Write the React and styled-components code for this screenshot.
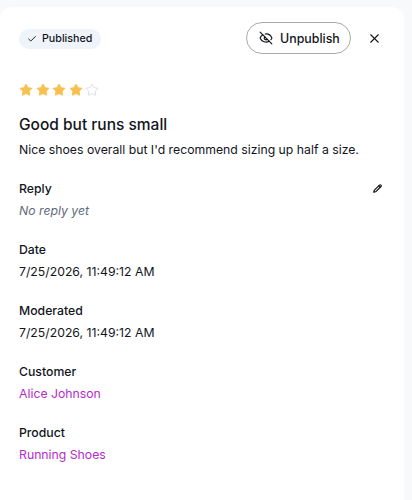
import React from "react";
import styled, { createGlobalStyle } from "styled-components";
import { Check, EyeOff, X, Pencil, Star } from "lucide-react";

const GlobalStyle = createGlobalStyle`
  html, body {
    margin: 0;
    height: 100%;
    background: #f8f9fb;
    font-family: Inter, "Liberation Sans", sans-serif;
    color: #12151c;
    overflow: hidden;
  }
`;

const Panel = styled.div`
  box-sizing: border-box;
  width: 404px;
  height: 493px;
  margin-top: 7px;
  padding: 15px 19px 0;
  background: #fff;
  border-radius: 12px 12px 0 0;
`;

const Header = styled.header`
  display: flex;
  align-items: center;
  justify-content: space-between;
  height: 32px;
`;

const Badge = styled.span`
  display: inline-flex;
  align-items: center;
  gap: 5px;
  height: 20px;
  margin-top: 1px;
  padding: 0 9px 0 8px;
  border-radius: 10px;
  background: #eff3fa;
  font-size: 10.7px;
  font-weight: 500;
`;

const Actions = styled.div`
  display: flex;
  align-items: center;
  gap: 16px;
  margin-right: 3px;
`;

const PillButton = styled.button`
  display: inline-flex;
  align-items: center;
  gap: 7px;
  box-sizing: border-box;
  width: 105px;
  height: 32px;
  padding: 0 0 0 12px;
  border: 1px solid #a9a9ab;
  border-radius: 16px;
  background: #fff;
  color: inherit;
  font: 500 12.4px Inter, sans-serif;

  svg {
    flex-shrink: 0;
  }
`;

const IconButton = styled.button`
  display: flex;
  padding: 0;
  border: 0;
  background: none;
  color: inherit;
`;

const Stars = styled.div`
  display: flex;
  gap: 2.5px;
  margin-top: 29px;
`;

const Title = styled.h2`
  margin: 17px 0 0;
  font-size: 15.5px;
  line-height: 22px;
  font-weight: 500;
`;

const Body = styled.p`
  margin: 4px 0 0;
  font-size: 12.25px;
  line-height: 20px;
`;

const Section = styled.section`
  margin-top: ${(p) => p.$gap || 19.2}px;
`;

const LabelRow = styled.div`
  display: flex;
  align-items: center;
  justify-content: space-between;
  padding-right: 3px;
`;

const Label = styled.div`
  font-size: 12.25px;
  line-height: 20px;
  font-weight: 500;
`;

const Value = styled.div`
  margin-top: 2px;
  font-size: 12.25px;
  line-height: 20px;
  color: ${(p) => (p.$link ? "#b52ccb" : "inherit")};
`;

const Muted = styled(Value)`
  color: #5f6b7c;
  font-style: italic;
`;

const fields = [
  { label: "Date", value: "7/25/2026, 11:49:12 AM" },
  { label: "Moderated", value: "7/25/2026, 11:49:12 AM" },
  { label: "Customer", value: "Alice Johnson", link: true },
  { label: "Product", value: "Running Shoes", link: true },
];

export default function App() {
  return (
    <>
      <GlobalStyle />
      <Panel>
        <Header>
          <Badge>
            <Check size={10} strokeWidth={2.25} />
            Published
          </Badge>
          <Actions>
            <PillButton>
              <EyeOff size={14} strokeWidth={2} />
              Unpublish
            </PillButton>
            <IconButton>
              <X size={15} strokeWidth={1.75} />
            </IconButton>
          </Actions>
        </Header>
        <Stars>
          {[0, 1, 2, 3, 4].map((i) => (
            <Star
              key={i}
              size={14}
              strokeWidth={1.5}
              color={i < 4 ? "#f8c04e" : "#d5dae3"}
              fill={i < 4 ? "#f8c04e" : "none"}
            />
          ))}
        </Stars>
        <Title>Good but runs small</Title>
        <Body>Nice shoes overall but I'd recommend sizing up half a size.</Body>
        <Section $gap={18.7}>
          <LabelRow>
            <Label>Reply</Label>
            <Pencil size={9} strokeWidth={3.25} />
          </LabelRow>
          <Muted>No reply yet</Muted>
        </Section>
        {fields.map((f) => (
          <Section key={f.label}>
            <Label>{f.label}</Label>
            <Value $link={f.link}>{f.value}</Value>
          </Section>
        ))}
      </Panel>
    </>
  );
}
